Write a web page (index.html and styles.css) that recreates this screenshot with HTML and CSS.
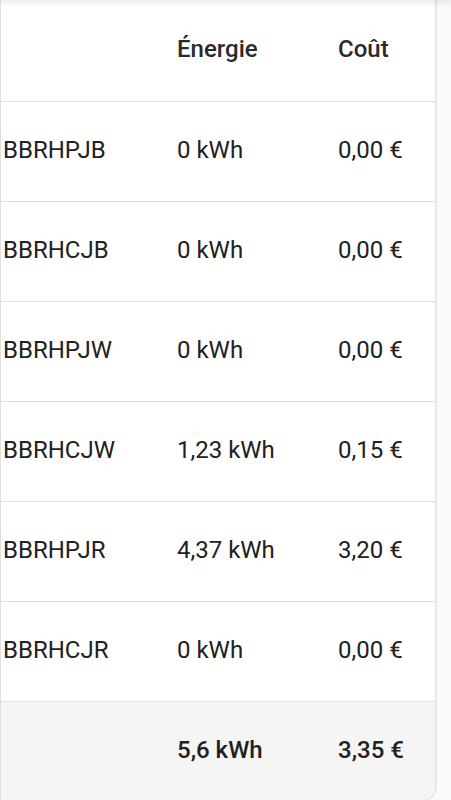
FILE: index.html
```html
<!DOCTYPE html>
<html lang="fr">
<head>
  <meta charset="UTF-8">
  <meta name="viewport" content="width=device-width, initial-scale=1.0">
  <title>Tarifs</title>
  <link rel="stylesheet" href="styles.css">
</head>
<body>
  <div class="topbar"></div>
  <div class="card">
    <table class="tarifs">
      <colgroup>
        <col class="col-name">
        <col class="col-energy">
        <col class="col-cost">
      </colgroup>
      <thead>
        <tr>
          <th></th>
          <th>Énergie</th>
          <th>Coût</th>
        </tr>
      </thead>
      <tbody>
        <tr><td>BBRHPJB</td><td>0 kWh</td><td>0,00 €</td></tr>
        <tr><td>BBRHCJB</td><td>0 kWh</td><td>0,00 €</td></tr>
        <tr><td>BBRHPJW</td><td>0 kWh</td><td>0,00 €</td></tr>
        <tr><td>BBRHCJW</td><td>1,23 kWh</td><td>0,15 €</td></tr>
        <tr><td>BBRHPJR</td><td>4,37 kWh</td><td>3,20 €</td></tr>
        <tr><td>BBRHCJR</td><td>0 kWh</td><td>0,00 €</td></tr>
      </tbody>
      <tfoot>
        <tr><td></td><td>5,6 kWh</td><td>3,35 €</td></tr>
      </tfoot>
    </table>
  </div>
</body>
</html>
```

FILE: styles.css
```css
body {
  font-family: Roboto, "Noto Sans", sans-serif;
  margin: 0;
  padding: 0;
  background-color: #fafafa;
  color: #212121;
  overflow: hidden;
}
.topbar {
  height: 0;
  position: relative;
  z-index: 1;
  box-shadow: 0 0 6px 1px rgba(0, 0, 0, 0.25);
}
.card {
  width: 436px;
  box-sizing: border-box;
  background-color: white;
  border: 1px solid #e0e0e0;
  border-top: none;
  border-radius: 0 0 14px 0;
  overflow: hidden;
  box-shadow: 1px 0 2px rgba(0, 0, 0, 0.06);
}
.tarifs {
  width: 100%;
  border-collapse: collapse;
  table-layout: fixed;
  font-size: 24px;
}
.col-name {
  width: 176px;
}
.col-energy {
  width: 161px;
}
.tarifs th,
.tarifs td {
  text-align: left;
  padding: 0 0 3px 0;
  height: 96px;
  border-bottom: 1px solid #e0e0e0;
}
.tarifs td:first-child {
  padding-left: 2px;
}
.tarifs th {
  font-weight: 500;
  height: 98px;
  color: #2a2a2a;
}
.tarifs tfoot td {
  background-color: #f5f5f5;
  font-weight: 500;
  height: 95px;
  border-top: 1px solid #d6d6d6;
  border-bottom: none;
}
```
